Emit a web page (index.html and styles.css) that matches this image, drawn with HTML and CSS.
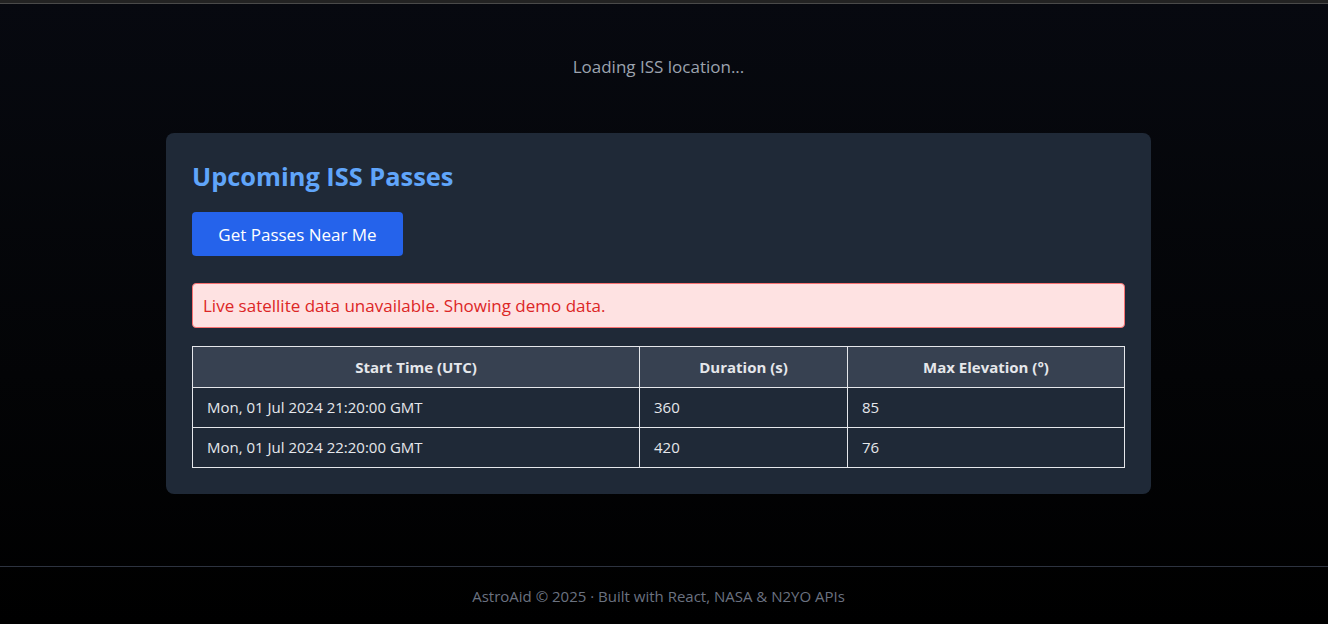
FILE: index.html
```html
<!DOCTYPE html>
<html lang="en">
<head>
<meta charset="utf-8">
<title>AstroAid</title>
<link rel="stylesheet" href="styles.css">
</head>
<body>
<div class="topbar"></div>
<main class="main">
  <p class="loading">Loading ISS location...</p>
  <section class="card">
    <h2 class="title">Upcoming ISS Passes</h2>
    <button class="btn">Get Passes Near Me</button>
    <div class="alert">Live satellite data unavailable. Showing demo data.</div>
    <table class="passes">
      <thead>
        <tr><th class="c1">Start Time (UTC)</th><th class="c2">Duration (s)</th><th class="c3">Max Elevation (°)</th></tr>
      </thead>
      <tbody>
        <tr><td>Mon, 01 Jul 2024 21:20:00 GMT</td><td>360</td><td>85</td></tr>
        <tr><td>Mon, 01 Jul 2024 22:20:00 GMT</td><td>420</td><td>76</td></tr>
      </tbody>
    </table>
  </section>
</main>
<footer class="footer">AstroAid © 2025 · Built with React, NASA &amp; N2YO APIs</footer>
</body>
</html>
```

FILE: styles.css
```css
* { box-sizing: border-box; }
html, body { height: 100%; }
body {
  margin: 0;
  padding-right: 11px;
  background: linear-gradient(180deg, #070910 0%, #030406 60%, #000 100%);
  font-family: "Open Sans", "Noto Sans", sans-serif;
  color: #e5e7eb;
  display: flex;
  flex-direction: column;
}
.topbar {
  height: 4px;
  background: #232323;
  border-bottom: 1px solid #4a4a4a;
  margin-right: -11px;
}
.main {
  width: 985px;
  margin: 0 auto;
  padding-top: 51px;
  flex: 1;
}
.loading {
  margin: 0 0 54px;
  text-align: center;
  font-size: 17px;
  line-height: 24px;
  color: #9ca3af;
}
.card {
  background: #1f2937;
  border-radius: 8px;
  padding: 26px 26px 26px;
}
.title {
  margin: 0 0 19px;
  font-size: 25.4px;
  line-height: 34px;
  font-weight: 700;
  color: #60a5fa;
}
.btn {
  display: block;
  height: 44px;
  width: 211px;
  border: 0;
  border-radius: 4px;
  background: #2563eb;
  color: #fff;
  font-family: inherit;
  font-size: 17px;
  padding: 0;
}
.alert {
  margin-top: 27px;
  height: 45px;
  display: flex;
  align-items: center;
  padding: 0 10px;
  background: #fee2e2;
  border: 1px solid #f87171;
  border-radius: 4px;
  color: #dc2626;
  font-size: 17px;
}
.passes {
  margin-top: 18px;
  width: 100%;
  border-collapse: collapse;
  font-size: 15px;
  color: #e5e7eb;
}
.passes th, .passes td {
  border: 1px solid #e5e7eb;
  height: 40px;
  padding: 0 14px 1px;
}
.passes th {
  background: #374151;
  font-weight: 700;
  text-align: center;
  height: 41px;
}
.passes td { text-align: left; }
.c1 { width: 447px; }
.c2 { width: 208px; }
.footer {
  margin-right: -11px;
  padding-right: 11px;
  border-top: 1px solid #2d3340;
  height: 58px;
  display: flex;
  align-items: center;
  justify-content: center;
  font-size: 15px;
  color: #6b7280;
}
```
